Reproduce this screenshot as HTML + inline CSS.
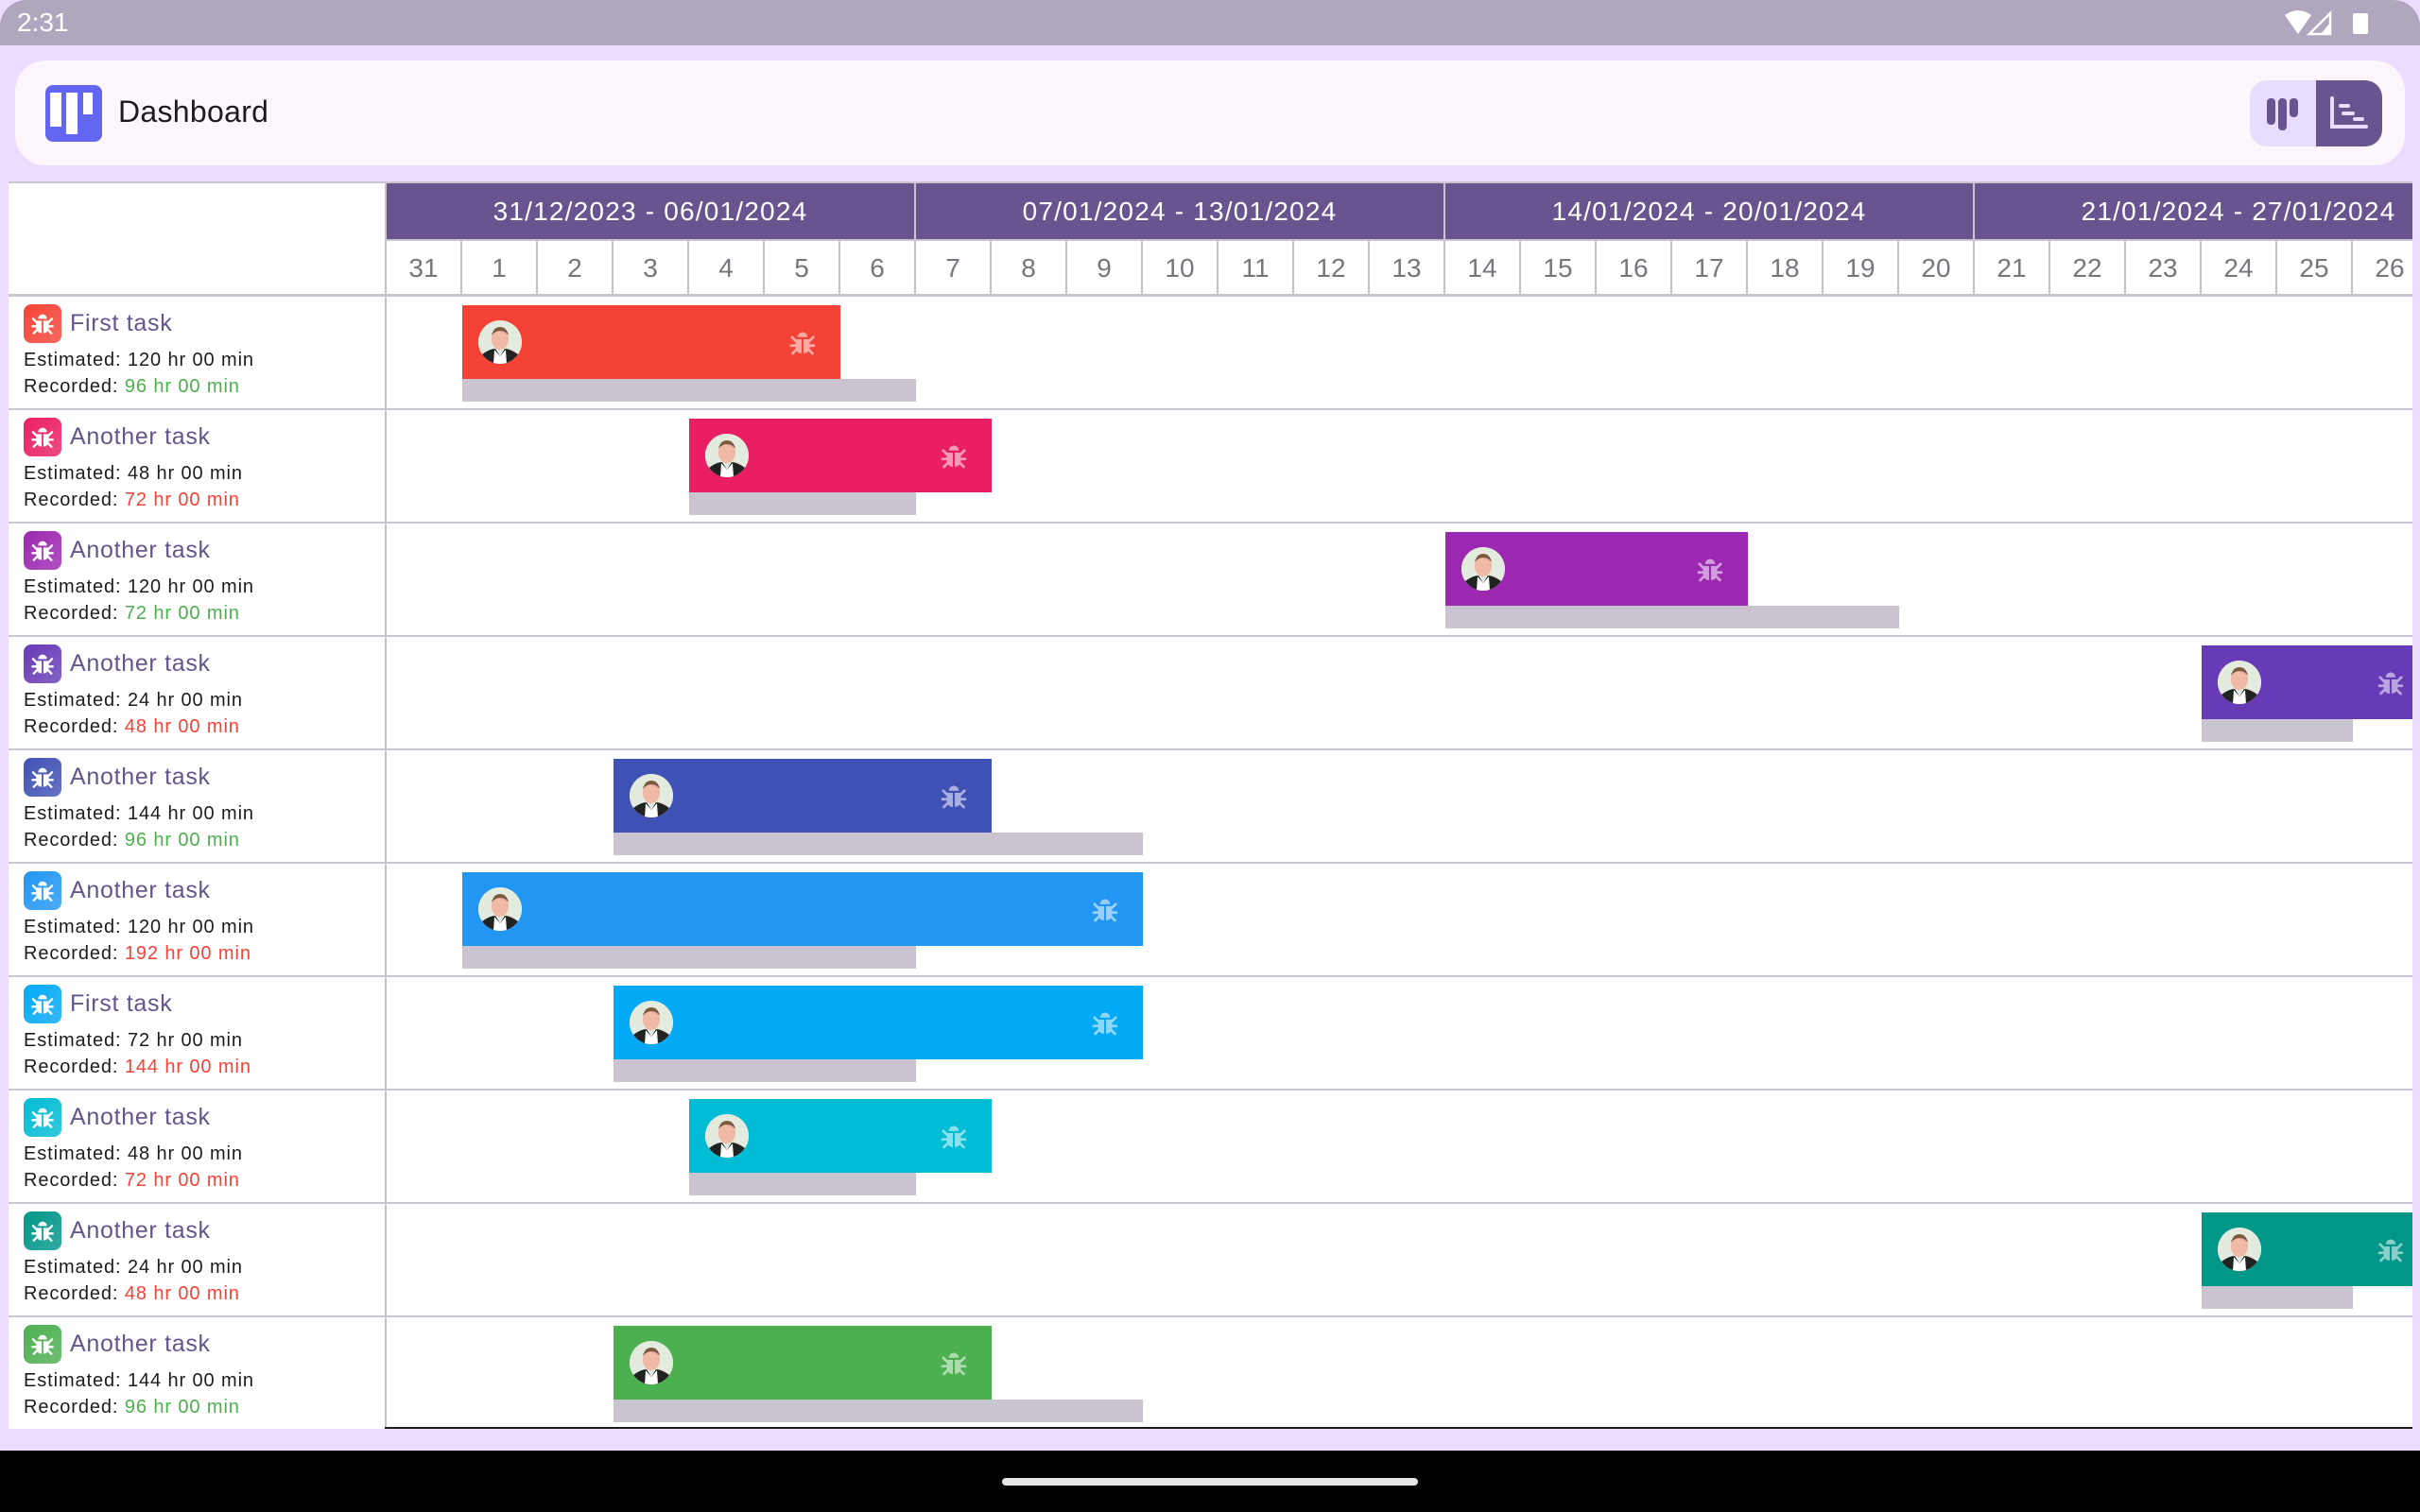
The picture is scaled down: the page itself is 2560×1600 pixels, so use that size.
<!DOCTYPE html>
<html><head><meta charset="utf-8"><style>
*{margin:0;padding:0;box-sizing:border-box}
body{width:2560px;height:1600px;overflow:hidden;background:#ecdcff;font-family:"Liberation Sans",Roboto,sans-serif;position:relative}
.abs{position:absolute}
.status{left:0;top:0;width:2560px;height:48px;background:#b0a7bf;border-radius:28px 28px 0 0}
.time{left:18px;top:8px;font-size:28px;color:#fff}
.card{left:16px;top:64px;width:2528px;height:111px;background:#fdf6fd;border-radius:32px}
.title{left:125px;top:100px;font-size:32px;color:#1d1b20;letter-spacing:.3px}
.grid{left:9px;top:192px;width:2543px;height:1320px;background:#fff;overflow:hidden;border-top:2px solid #cac4d0}
.wk{height:59px;top:0;background:#685590;color:#fff;font-size:28px;text-align:center;line-height:59px;border-right:2px solid #cac4d0;letter-spacing:1.2px}
.day{top:61px;height:58px;width:80px;border-right:2px solid #cac4d0;color:#79747e;font-size:28px;text-align:center;line-height:58px}
.hl{left:0;height:2px;width:2543px;background:#cac4d0}
.vl{left:398px;top:0;width:2px;height:1320px;background:#cac4d0}
.ic{width:40px;height:41px;border-radius:8px}
.tt{font-size:25px;color:#65558f;letter-spacing:.7px}
.tx{font-size:20px;color:#1d1b20;letter-spacing:.9px}
.bar{height:78px}
.grey{height:24px;background:#cac4d0}
.av{width:46px;height:46px;border-radius:50%;overflow:hidden;background:#dfe6da}
</style></head><body>
<div class="abs status"></div>
<div class="abs time">2:31</div>
<svg class="abs" style="left:2415px;top:10px" width="100" height="28" viewBox="0 0 100 28">
<path d="M2 6 Q16 -4 30 6 L16 26 Z" fill="#fff"/>
<path d="M50 4 L50 26 L28 26 Z" fill="none" stroke="#fff" stroke-width="2.5"/><path d="M50 14 L50 26 L40 26 Z" fill="#fff"/>
<rect x="74" y="4" width="16" height="22" rx="2" fill="#fff"/>
</svg>
<div class="abs card"></div>
<svg class="abs" style="left:48px;top:90px" width="60" height="60" viewBox="0 0 60 60">
<rect width="60" height="60" rx="8" fill="#6366f1"/>
<rect x="5" y="8" width="12" height="36" fill="#fff"/><rect x="22" y="8" width="12" height="44" fill="#fff"/><rect x="40" y="8" width="10" height="23" fill="#fff"/>
</svg>
<div class="abs title">Dashboard</div>
<div class="abs" style="left:2380px;top:85px;height:70px;background:#e9ddff;border-radius:18px 0 0 18px;width:70px"></div>
<div class="abs" style="left:2450px;top:85px;width:70px;height:70px;background:#685590;border-radius:0 18px 18px 0"></div>
<svg class="abs" style="left:2396px;top:102px" width="40" height="36" viewBox="0 0 40 36"><rect x="2" y="2" width="9" height="28" rx="4" fill="#685590"/><rect x="14" y="2" width="9" height="34" rx="4" fill="#685590"/><rect x="26" y="2" width="9" height="20" rx="4" fill="#685590"/></svg>
<svg class="abs" style="left:2463px;top:100px" width="46" height="40" viewBox="0 0 46 40"><path d="M4 4 V34 H40" fill="none" stroke="#e9ddff" stroke-width="4" stroke-linecap="round"/><rect x="11" y="10" width="12" height="4" rx="2" fill="#e9ddff"/><rect x="14" y="18" width="14" height="4" rx="2" fill="#e9ddff"/><rect x="26" y="24" width="12" height="4" rx="2" fill="#e9ddff"/></svg>

<div class="abs grid">
<div class="abs wk" style="left:400px;width:560px">31/12/2023 - 06/01/2024</div>
<div class="abs wk" style="left:960px;width:560px">07/01/2024 - 13/01/2024</div>
<div class="abs wk" style="left:1520px;width:560px">14/01/2024 - 20/01/2024</div>
<div class="abs wk" style="left:2080px;width:560px">21/01/2024 - 27/01/2024</div>
<div id="days"></div>
<div class="abs vl"></div>
<div id="rows"></div>
<div class="abs" style="left:398px;top:1316px;width:2200px;height:4px;background:#1d1b20"></div>
</div>
<div class="abs" style="left:0;top:1535px;width:2560px;height:65px;background:#000"></div>
<div class="abs" style="left:1060px;top:1564px;width:440px;height:8px;background:#e6e6e6;border-radius:4px"></div>
<script>
var d=document.getElementById('days'),h='';
var nums=[31,1,2,3,4,5,6,7,8,9,10,11,12,13,14,15,16,17,18,19,20,21,22,23,24,25,26,27];
for(var i=0;i<28;i++)h+='<div class="abs day" style="left:'+(400+i*80)+'px">'+nums[i]+'</div>';
h+='<div class="abs hl" style="top:59px;left:398px"></div><div class="abs hl" style="top:117px;height:3px"></div>';
d.innerHTML=h;
var bug='<svg width="100%" height="100%" viewBox="0 0 24 24"><path d="M8.5 8.5 A3.5 3.5 0 0 1 15.5 8.5 Z" fill="COL"/><path d="M7 10 H11.3 V20 Q7 19.5 7 15 Z M12.7 10 H17 V15 Q17 19.5 12.7 20 Z" fill="COL"/><path d="M7 11 L4.5 8.5 M17 11 L19.5 8.5 M7 14.5 H4 M17 14.5 H20 M7.5 17.5 L5 20 M16.5 17.5 L19 20" stroke="COL" stroke-width="1.8" stroke-linecap="round"/></svg>';
var face='<svg width="46" height="46" viewBox="0 0 46 46"><rect width="46" height="46" fill="#e3ebdf"/><path d="M0 46 L4 36 Q12 30 18 30 L23 38 L28 30 Q34 30 42 36 L46 46 Z" fill="#222"/><path d="M17 31 L23 38 L29 31 L30 46 L16 46 Z" fill="#fff"/><ellipse cx="23" cy="20" rx="9" ry="11" fill="#f0b9a6"/><path d="M14 16 Q16 7 23 7 Q30 7 32 16 Q28 11 23 11 Q18 11 14 16Z" fill="#7a5a40"/></svg>';
var R=[
['#f44336','First task','120','96',1,6,7,'#4caf50'],
['#e91e63','Another task','48','72',4,8,7,'#f44336'],
['#9c27b0','Another task','120','72',14,18,20,'#4caf50'],
['#673ab7','Another task','24','48',24,27,26,'#f44336'],
['#3f51b5','Another task','144','96',3,8,10,'#4caf50'],
['#2196f3','Another task','120','192',1,10,7,'#f44336'],
['#03a9f4','First task','72','144',3,10,7,'#f44336'],
['#00bcd4','Another task','48','72',4,8,7,'#f44336'],
['#009688','Another task','24','48',24,27,26,'#f44336'],
['#4caf50','Another task','144','96',3,8,10,'#4caf50']];
var o='';
R.forEach(function(r,i){
var t=120+i*120;
if(i>0)o+='<div class="abs hl" style="top:'+(t-2)+'px"></div>';
o+='<div class="abs ic" style="left:16px;top:'+(t+8)+'px;background:linear-gradient(135deg,'+r[0]+','+r[0]+'cc)"><div style="position:absolute;left:4px;top:4px;width:32px;height:32px">'+bug.replace(/COL/g,'#fff')+'</div></div>';
o+='<div class="abs tt" style="left:65px;top:'+(t+14)+'px">'+r[1]+'</div>';
o+='<div class="abs tx" style="left:16px;top:'+(t+56)+'px">Estimated: '+r[2]+' hr 00 min</div>';
o+='<div class="abs tx" style="left:16px;top:'+(t+84)+'px">Recorded: <span style="color:'+r[7]+'">'+r[3]+' hr 00 min</span></div>';
var x=400+r[4]*80,w=(r[5]-r[4])*80;
o+='<div class="abs bar" style="left:'+x+'px;top:'+(t+9)+'px;width:'+w+'px;background:'+r[0]+'"><div class="abs av" style="left:17px;top:16px">'+face+'</div><div class="abs" style="right:22px;top:21px;width:36px;height:36px;opacity:.55">'+bug.replace(/COL/g,'#fff')+'</div></div>';
o+='<div class="abs grey" style="left:'+x+'px;top:'+(t+87)+'px;width:'+((r[6]-r[4])*80)+'px"></div>';
});
document.getElementById('rows').innerHTML=o;
</script>
</body></html>
